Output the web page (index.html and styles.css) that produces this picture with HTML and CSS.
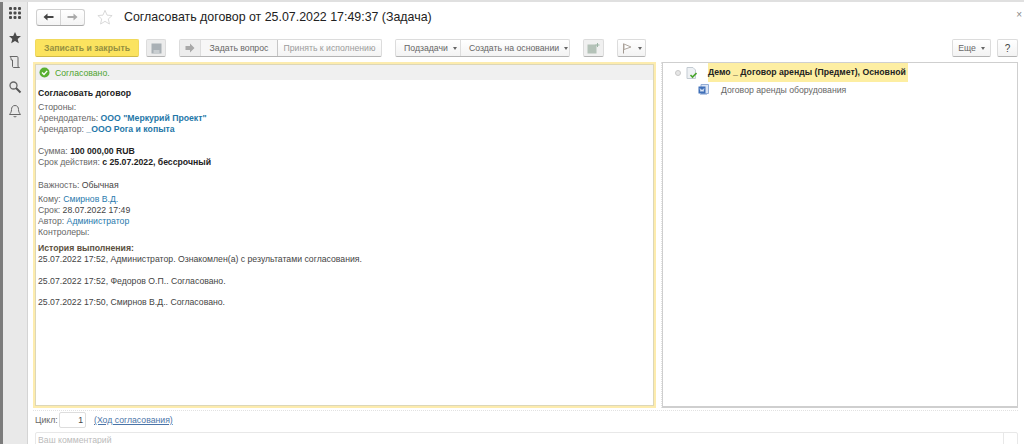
FILE: index.html
```html
<!DOCTYPE html>
<html lang="ru">
<head>
<meta charset="utf-8">
<title>Согласовать договор</title>
<link rel="stylesheet" href="styles.css">
</head>
<body>
<div class="app">
  <nav class="rail">
    <svg class="rail-icon" width="14" height="14" viewBox="0 0 14 14"><g fill="#4a4a4a"><rect x="1" y="1" width="3" height="3" rx="1"/><rect x="5.500" y="1" width="3" height="3" rx="1"/><rect x="10" y="1" width="3" height="3" rx="1"/><rect x="1" y="5.500" width="3" height="3" rx="1"/><rect x="5.500" y="5.500" width="3" height="3" rx="1"/><rect x="10" y="5.500" width="3" height="3" rx="1"/><rect x="1" y="10" width="3" height="3" rx="1"/><rect x="5.500" y="10" width="3" height="3" rx="1"/><rect x="10" y="10" width="3" height="3" rx="1"/></g></svg>
    <svg class="rail-icon" width="14" height="14" viewBox="0 0 14 14"><path d="M7 1l1.800 4h4.200l-3.300 2.900 1.100 4.400L7 10l-3.800 2.300 1.100-4.400L1 5h4.200z" fill="#4a4a4a"/></svg>
    <svg class="rail-icon" width="14" height="14" viewBox="0 0 14 14"><path d="M2 1.500h7c.8 0 1 .6 1 1.200v8.300c0 .8.700 1.500 1.500 1.500H5.500c-.8 0-1-.7-1-1.500V5H3.200C3.200 3.500 2.800 2 2 1.500z" fill="none" stroke="#666" stroke-width="1"/></svg>
    <svg class="rail-icon" width="14" height="14" viewBox="0 0 14 14"><circle cx="5.500" cy="5.500" r="3.500" fill="none" stroke="#666" stroke-width="1.300"/><path d="M8 8l4.500 4.500" stroke="#555" stroke-width="2"/></svg>
    <svg class="rail-icon" width="14" height="14" viewBox="0 0 14 14"><path d="M7 1.500c-2.500 0-3.500 2-3.500 4 0 2.500-1 3.500-2 5h11c-1-1.500-2-2.500-2-5 0-2-1-4-3.500-4z" fill="none" stroke="#666" stroke-width="1"/><path d="M5.500 12c.5 1.200 2.500 1.200 3 0" fill="none" stroke="#666"/></svg>
  </nav>
  <main class="main">
    <header class="head">
      <div class="nav-group">
        <span class="nav-btn"><svg width="11" height="8" viewBox="0 0 11 8"><path d="M0.500 4L4.500 0.500V3H10.500V5H4.500V7.500z" fill="#444"/></svg></span>
        <span class="nav-btn"><svg width="11" height="8" viewBox="0 0 11 8"><path d="M10.500 4L6.500 0.500V3H0.500V5H6.500V7.500z" fill="#aaa"/></svg></span>
      </div>
      <svg class="star" width="16" height="16" viewBox="0 0 18 17"><path d="M9 1l2.300 5.400 5.700.5-4.300 3.800 1.300 5.700L9 13.400 4 16.400l1.300-5.700L1 6.900l5.700-.5z" fill="#fff" stroke="#d4d4d4"/></svg>
      <h1 class="title">Согласовать договор от 25.07.2022 17:49:37 (Задача)</h1>
      <span class="close">×</span>
    </header>
    <div class="toolbar">
      <button class="btn primary">Записать и закрыть</button>
      <button class="btn icon-btn"><svg width="11" height="11" viewBox="0 0 11 11"><path d="M0.500 0.500h10v10h-10z" fill="#a9b0b5"/><path d="M2.500 7h6v3.500h-6z" fill="#c9ced1"/></svg></button>
      <div class="btn-group ask">
        <span class="seg seg-icon"><svg width="10" height="10" viewBox="0 0 10 10"><path d="M0.500 3h4.500V0.500L9.500 5 5 9.500V7H0.500z" fill="#a8a8a8"/></svg></span>
        <span class="seg">Задать вопрос</span>
        <span class="seg muted">Принять к исполнению</span>
      </div>
      <div class="btn-group tasks">
        <span class="seg">Подзадачи<i class="caret"></i></span>
        <span class="seg">Создать на основании<i class="caret"></i></span>
      </div>
      <button class="btn icon-btn report"><svg width="13" height="11" viewBox="0 0 13 11"><path d="M0.500 1.500h9v9h-9z" fill="#b4c2b8"/><path d="M10.500 0v4M8.500 2h4" stroke="#9db5a5"/></svg></button>
      <button class="btn flag"><svg width="11" height="11" viewBox="0 0 11 11"><path d="M1.500 0.500v10" stroke="#a39a92"/><path d="M2 1l7 3-7 2.500z" fill="#fff" stroke="#b0a8a0"/></svg><i class="caret"></i></button>
      <span class="spacer"></span>
      <button class="btn more">Еще<i class="caret"></i></button>
      <button class="btn help">?</button>
    </div>
    <div class="panels">
      <section class="task">
        <div class="status">
          <svg width="11" height="11" viewBox="0 0 11 11"><circle cx="5.500" cy="5.500" r="5" fill="#5ab031"/><path d="M3 5.500l2 2 3.200-3.600" fill="none" stroke="#fff" stroke-width="1.400"/></svg>
          <span>Согласовано.</span>
        </div>
        <div class="doc">
          <p class="doc-title">Согласовать договор</p>
          <div class="block parties">
            <div>Стороны:</div>
            <div>Арендодатель: <a class="strong-link">ООО "Меркурий Проект"</a></div>
            <div>Арендатор: <a class="strong-link">_ООО Рога и копыта</a></div>
          </div>
          <div class="block sum">
            <div>Сумма: <b class="value">100 000,00 RUB</b></div>
            <div>Срок действия: <b class="value">с 25.07.2022, бессрочный</b></div>
          </div>
          <div class="block importance">Важность: <span class="dark">Обычная</span></div>
          <div class="block people">
            <div>Кому: <a class="link">Смирнов В.Д.</a></div>
            <div>Срок: <span class="dark">28.07.2022 17:49</span></div>
            <div>Автор: <a class="link">Администратор</a></div>
            <div>Контролеры:</div>
          </div>
          <div class="block history">
            <div class="history-title">История выполнения:</div>
            <div class="dark">25.07.2022 17:52, Администратор. Ознакомлен(а) с результатами согласования.</div>
            <div class="dark gap">25.07.2022 17:52, Федоров О.П.. Согласовано.</div>
            <div class="dark gap">25.07.2022 17:50, Смирнов В.Д.. Согласовано.</div>
          </div>
        </div>
      </section>
      <div class="split"></div>
      <section class="tree">
        <div class="tree-row root">
          <span class="toggle"></span>
          <svg class="doc-icon" width="11" height="12" viewBox="0 0 11 12"><path d="M1 0.500h6l2.500 2.500v8.500H1z" fill="#eef1f4" stroke="#c3cbd2"/><path d="M4.500 8l2 2 4-4" fill="none" stroke="#4aa52e" stroke-width="1.600"/></svg>
          <span class="tree-name">Демо _ Договор аренды (Предмет), Основной</span>
        </div>
        <div class="tree-row child">
          <svg class="word-icon" width="11" height="12" viewBox="0 0 11 12"><path d="M3 0.500h7.500v9H3z" fill="#dbe5f5" stroke="#93add6"/><rect x="0.500" y="2.500" width="7" height="7" fill="#3f6fb8"/><path d="M2 4.500l1 3 1-2 1 2 1-3" fill="none" stroke="#fff" stroke-width=".8"/><path d="M2 10.500h7" stroke="#b8c9e4"/></svg>
          <span>Договор аренды оборудования</span>
        </div>
      </section>
    </div>
    <div class="cycle">
      <span class="cycle-label">Цикл:</span>
      <span class="cycle-input">1</span>
      <a class="cycle-link">(Ход согласования)</a>
    </div>
    <div class="comment">
      <span class="placeholder">Ваш комментарий</span>
      <span class="comment-btn"></span>
    </div>
  </main>
</div>
</body>
</html>
```
FILE: styles.css
```css
* { box-sizing: border-box; }
html, body { margin: 0; height: 100%; overflow: hidden; background: #fff; }
body { font-family: "Liberation Sans", Arial, sans-serif; font-size: 8.700px; color: #666; }
.app { display: flex; height: 444px; border-top: 2px solid #e0e0e0; }

.rail { width: 28px; flex: none; background: #e9e9e9; border-left: 3px solid #7c7c7c; display: flex; flex-direction: column; align-items: center; gap: 10.500px; padding-top: 4px; border-right: 1px solid #d4d4d4; }
.rail-icon { display: block; }

.main { flex: 1; min-width: 0; display: flex; flex-direction: column; padding: 0 6px 0 5px; }

.head { height: 29px; display: flex; align-items: center; padding: 1px 0 0 3px; flex: none; }
.nav-group { display: flex; width: 49px; height: 17px; border: 1px solid #d0d0d0; border-bottom-color: #aaa; border-radius: 3px; background: linear-gradient(#fff, #f4f4f4); }
.nav-btn { flex: 1; display: flex; align-items: center; justify-content: center; }
.nav-btn + .nav-btn { border-left: 1px solid #d4d4d4; }
.star { margin-left: 12px; flex: none; }
.title { margin: 0 0 0 11px; font-size: 12.400px; font-weight: 400; color: #222; white-space: nowrap; }
.close { margin-left: auto; margin-right: -4px; margin-top: -5px; color: #888; font-size: 10px; }

.toolbar { height: 20px; margin-top: 8px; display: flex; align-items: stretch; flex: none; padding-left: 2px; }
.btn, .btn-group { height: 18px; border: 1px solid #dcdcdc; border-bottom-color: #b4b4b4; border-radius: 2px; background: linear-gradient(#fff, #f3f3f3); font: inherit; color: #666; padding: 0; display: flex; align-items: center; justify-content: center; }
.btn.primary { width: 104px; background: #fbe35f; border-color: #f0d95c; border-bottom-color: #d0ba48; color: #95903f; font-weight: 700; }
.icon-btn { width: 20px; margin-left: 7px; background: #ececec; }
.ask { margin-left: 13px; width: 203px; }
.seg { height: 100%; display: flex; align-items: center; justify-content: center; padding: 0 8px; white-space: nowrap; }
.seg-icon { width: 20px; padding: 0; background: #ededed; }
.ask .seg:nth-child(2) { width: 78px; border-left: 1px solid #ddd; border-right: 1px solid #c6c6c6; background: #f7f7f7; padding: 0; }
.ask .seg.muted { flex: 1; color: #9c9c9c; padding: 0; }
.tasks { margin-left: 13px; width: 175px; }
.tasks .seg { justify-content: flex-start; padding: 0 0 0 8px; }
.tasks .seg:first-child { width: 65px; border-right: 1px solid #ddd; }
.tasks .seg:last-child { flex: 1; }
.caret { display: inline-block; width: 0; height: 0; border: 2px solid transparent; border-top: 3px solid #666; border-bottom: 0; margin-left: 5px; }
.report { margin-left: 13px; width: 21px; background: #f0f0f0; }
.flag { margin-left: 13px; width: 29px; }
.spacer { flex: 1; }
.more { width: 39px; }
.help { width: 21px; margin-left: 6px; font-size: 10px; color: #444; }

.panels { height: 349px; display: flex; flex: none; margin-top: 3px; padding-bottom: 2px; border-bottom: 1px dotted #e2e2e2; }
.task { width: 623px; flex: none; border: 2px solid #fdecae; box-shadow: inset 0 0 0 1px #ddd7b8; display: flex; flex-direction: column; }
.status { height: 15px; margin: 1px 1px 0; background: #f0f0f0; display: flex; align-items: center; gap: 5px; padding-left: 3px; color: #4fa32e; flex: none; }
.doc { padding: 0 0 0 1px; margin-left: 2px; line-height: 10.900px; }
.doc-title { margin: 6.500px 0 0; font-weight: 700; color: #222; line-height: 12px; }
.block { margin-top: 3.500px; }
.sum { margin-top: 11px; }
.importance { margin-top: 12px; }
.people { margin-top: 4px; }
.history { margin-top: 5px; }
.gap { margin-top: 10.800px; }
.dark { color: #444; }
.value { color: #222; }
.history-title { color: #5b5040; font-weight: 700; }
a { color: #2a7aad; }
.strong-link { color: #1f77a8; font-weight: 700; }

.split { width: 6px; flex: none; border-right: 1px dotted #e2e2e2; }
.tree { flex: 1; border: 1px solid #cfcfcf; border-bottom-width: 2px; }
.tree-row { display: flex; align-items: center; }
.root { height: 19px; padding-left: 12px; }
.toggle { width: 6px; height: 6px; border-radius: 50%; border: 1px solid #c8c8c8; background: #e6e6e6; margin-right: 5px; }
.doc-icon { margin-right: 11px; }
.tree-name { height: 19px; background: #fdeea2; color: #222; font-weight: 700; padding: 0 2px 0 0; line-height: 19px; }
.child { height: 16px; padding-left: 35px; gap: 12px; color: #666; }

.cycle { display: flex; align-items: center; height: 16px; margin-top: 1px; padding-left: 2px; flex: none; }
.cycle-label { width: 24px; flex: none; }
.cycle-input { width: 27px; height: 16px; border: 1px solid #ddd; border-radius: 2px; text-align: right; padding-right: 2px; color: #444; line-height: 14px; }
.cycle-link { margin-left: 8px; color: #4a74a8; text-decoration: underline; }
.comment { height: 30px; margin-top: 4px; margin-left: 2px; border: 1px solid #e8e8e8; border-radius: 2px; padding: 2px; display: flex; justify-content: space-between; flex: none; position: relative; }
.placeholder { color: #bbb; }
.comment-btn { position: absolute; right: 0; top: 0; bottom: 0; width: 14px; border-left: 1px solid #e8e8e8; }
```
